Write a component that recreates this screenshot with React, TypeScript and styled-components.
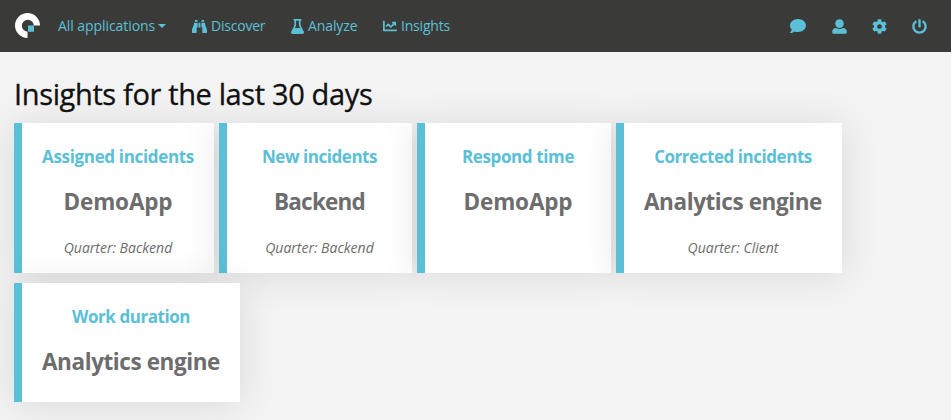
import React from "react";
import styled, { createGlobalStyle } from "styled-components";
import {
  FaBinoculars,
  FaChartLine,
  FaCog,
  FaComment,
  FaPowerOff,
} from "react-icons/fa";

const accent = "#5bc0d6";

const GlobalStyle = createGlobalStyle`
  * { box-sizing: border-box; }
  body {
    margin: 0;
    background: #f3f3f3;
    color: #111;
    font-family: "Open Sans", "Noto Sans", sans-serif;
  }
`;

const Page = styled.div`
  height: 420px;
  overflow: hidden;
`;

const Navbar = styled.nav`
  position: relative;
  z-index: 1;
  display: flex;
  align-items: center;
  height: 52px;
  padding: 0 12px 0 15px;
  background: #3a3a38;
  color: ${accent};
`;

const Logo = styled.svg`
  width: 25px;
  height: 25px;
  margin: 0 18px 1px 0;
`;

const NavLink = styled.a<{ $width: number; $spacing?: number }>`
  display: flex;
  align-items: center;
  width: ${(p) => p.$width}px;
  font-size: 14px;
  line-height: 20px;
  letter-spacing: ${(p) => p.$spacing ?? 0}px;
  white-space: nowrap;

  svg {
    flex: none;
    margin-right: 4px;
  }
`;

const Caret = styled.span`
  margin: 0 0 1px 3px;
  border: solid transparent;
  border-width: 4.5px 4.5px 0;
  border-top-color: ${accent};
`;

const Actions = styled.div`
  display: flex;
  margin-left: auto;
`;

const Action = styled.a<{ $width?: number }>`
  display: flex;
  align-items: center;
  justify-content: center;
  width: ${(p) => p.$width ?? 41}px;
`;

const Main = styled.main`
  padding: 22px 14px 0;
`;

const Heading = styled.h2`
  margin: 0;
  height: 49px;
  font-size: 29px;
  line-height: 40px;
  font-weight: 400;
  letter-spacing: -0.36px;
  -webkit-text-stroke: 0.3px #111;
  white-space: nowrap;
`;

const Cards = styled.section`
  display: flex;
  flex-wrap: wrap;
  align-items: flex-start;
  gap: 10px 5px;
`;

const Card = styled.article<{ $width: number; $height?: number }>`
  display: flex;
  flex-direction: column;
  align-items: center;
  width: ${(p) => p.$width}px;
  height: ${(p) => p.$height ?? 150}px;
  padding-top: 22px;
  border-left: 8px solid ${accent};
  background: #fff;
  box-shadow: 0 2px 36px rgba(0, 0, 0, 0.105);
  white-space: nowrap;
`;

const CardTitle = styled.h5<{ $spacing: number }>`
  margin: 0 0 17px;
  color: ${accent};
  font-size: 17px;
  line-height: 24px;
  font-weight: 700;
  letter-spacing: ${(p) => p.$spacing}px;
`;

const CardValue = styled.div<{ $spacing: number }>`
  margin-bottom: 20px;
  color: #6d6d6d;
  font-size: 22.5px;
  line-height: 32px;
  font-weight: 700;
  letter-spacing: ${(p) => p.$spacing}px;
`;

const CardNote = styled.em`
  color: #6d6d6d;
  font-size: 14px;
  line-height: 20px;
`;

const FlaskIcon = () => (
  <svg width="13" height="15" viewBox="0 0 13 15" fill="currentColor">
    <path
      fillRule="evenodd"
      d="M2.6 0h7.8v1.8H9.6v4.5l3.1 6.2c.7 1.3 0 2.5-1.3 2.5H1.6C.3 15-.4 13.8.3 12.5l3.1-6.2V1.8h-.8ZM5.1 1.8v4.7L3.9 9h5.2L7.9 6.5V1.8Z"
    />
  </svg>
);

const UserIcon = () => (
  <svg width="15" height="15" viewBox="0 0 15 15" fill="currentColor">
    <circle cx="7.5" cy="4.6" r="4.3" />
    <path d="M4 8.9C1.6 9 .2 10.6.2 12.5v.8c0 .9.6 1.5 1.5 1.5h11.6c.9 0 1.5-.6 1.5-1.5v-.8c0-1.9-1.4-3.5-3.8-3.6-2 1.3-5 1.3-7 0Z" />
  </svg>
);

const insights = [
  { title: "Assigned incidents", ts: -0.33, value: "DemoApp", vs: -0.15, note: "Quarter: Backend", width: 200 },
  { title: "New incidents", ts: -0.45, value: "Backend", vs: -0.8, note: "Quarter: Backend", width: 193 },
  { title: "Respond time", ts: -0.38, value: "DemoApp", vs: -0.15, width: 194 },
  { title: "Corrected incidents", ts: -0.45, value: "Analytics engine", vs: -0.41, note: "Quarter: Client", width: 226 },
  { title: "Work duration", ts: -0.45, value: "Analytics engine", vs: -0.41, width: 226, height: 119 },
];

export default function App() {
  return (
    <Page>
      <GlobalStyle />
      <Navbar>
        <Logo viewBox="0 0 25 25">
          <path d="M25 12.5A12.5 12.5 0 1 0 12.5 25V18.7A6 6 0 1 1 18.8 12.5Z" fill="#fff" />
          <path d="M13 12.5h6v6.3h-6z" fill={accent} />
        </Logo>
        <NavLink $width={134} $spacing={-0.07}>
          All applications
          <Caret />
        </NavLink>
        <NavLink $width={99} $spacing={-0.22}>
          <FaBinoculars size={15} />
          Discover
        </NavLink>
        <NavLink $width={92} $spacing={-0.1}>
          <FlaskIcon />
          Analyze
        </NavLink>
        <NavLink $width={80} $spacing={-0.2}>
          <FaChartLine size={14} />
          Insights
        </NavLink>
        <Actions>
          <Action><FaComment size={16} /></Action>
          <Action $width={42}><UserIcon /></Action>
          <Action $width={39}><FaCog size={15} /></Action>
          <Action $width={40}><FaPowerOff size={15} /></Action>
        </Actions>
      </Navbar>
      <Main>
        <Heading>Insights for the last 30 days</Heading>
        <Cards>
          {insights.map((item) => (
            <Card key={item.title} $width={item.width} $height={item.height}>
              <CardTitle $spacing={item.ts}>{item.title}</CardTitle>
              <CardValue $spacing={item.vs}>{item.value}</CardValue>
              {item.note && <CardNote>{item.note}</CardNote>}
            </Card>
          ))}
        </Cards>
      </Main>
    </Page>
  );
}
